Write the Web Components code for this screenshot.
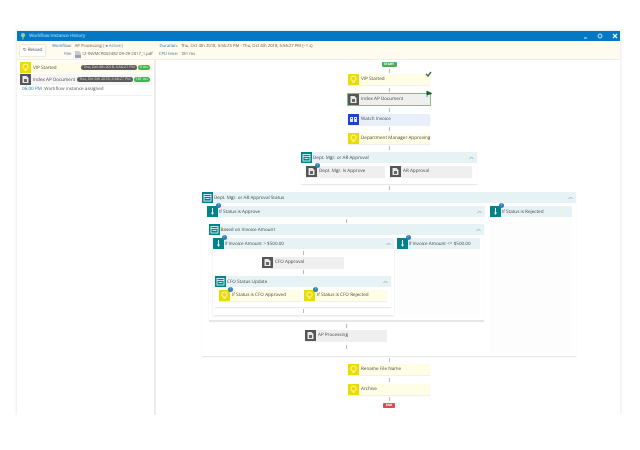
<!DOCTYPE html>
<html>
<head>
<meta charset="utf-8">
<title>Workflow Instance History</title>
<style>
    html, body { margin: 0; background: #fff; }
    body { font-family: "Open Sans", "Liberation Sans", sans-serif; color: #333; text-rendering: geometricPrecision; }
</style>
</head>
<body>
<wf-window>
    <wf-history slot="side"></wf-history>
    <wf-start kind="start">START</wf-start>
    <wf-link h="7"></wf-link>
    <wf-node kind="yellow" state="done">VIP Started</wf-node>
    <wf-link h="9"></wf-link>
    <wf-node kind="grey" state="active">Index AP Document</wf-node>
    <wf-link h="9"></wf-link>
    <wf-node kind="blue">Watch Invoice</wf-node>
    <wf-link h="8"></wf-link>
    <wf-node kind="yellow">Department Manager Approving</wf-node>
    <wf-link h="8"></wf-link>
    <wf-group label="Dept. Mgr. or AR Approval" w="176">
        <wf-split gap="5" pad="3px 5px 7px">
            <wf-node kind="grey" badge w="79">Dept. Mgr. Is Approve</wf-node>
            <wf-node kind="grey" w="82">AR Approval</wf-node>
        </wf-split>
    </wf-group>
    <wf-link h="8"></wf-link>
    <wf-group label="Dept. Mgr. or AR Approval Status" w="374">
        <wf-split gap="5" pad="3px 4px 4px 5px">
            <wf-branch label="If Status is Approve" w="278">
                <wf-link h="7"></wf-link>
                <wf-group label="Based on Invoice Amount" w="275" line>
                    <wf-split gap="3" pad="3px 4px 5px">
                        <wf-branch label="If Invoice Amount > $500.00" w="181" boxed>
                            <wf-link h="8"></wf-link>
                            <wf-node kind="grey">CFO Approval</wf-node>
                            <wf-link h="8"></wf-link>
                            <wf-group label="CFO Status Update" w="176">
                                <wf-split gap="2" pad="3px 4px 6px">
                                    <wf-node kind="yellow" badge w="83">If Status is CFO Approved</wf-node>
                                    <wf-node kind="yellow" badge w="83">If Status is CFO Rejected</wf-node>
                                </wf-split>
                            </wf-group>
                            <wf-link h="8"></wf-link>
                        </wf-branch>
                        <wf-branch label="If Invoice Amount <= $500.00" w="83"></wf-branch>
                    </wf-split>
                </wf-group>
                <wf-link h="9"></wf-link>
                <wf-node kind="grey">AP Processing</wf-node>
                <wf-link h="11"></wf-link>
            </wf-branch>
            <wf-branch label="If Status is Rejected" w="82"></wf-branch>
        </wf-split>
    </wf-group>
    <wf-link h="8"></wf-link>
    <wf-node kind="yellow">Rename File Name</wf-node>
    <wf-link h="9"></wf-link>
    <wf-node kind="yellow">Archive</wf-node>
    <wf-link h="8"></wf-link>
    <wf-start kind="end">END</wf-start>
</wf-window>

<script>
const ICONS = {
    yellow: `<circle cx="5.5" cy="4.6" r="2.6" fill="none" stroke="#fffbb0" stroke-width="1"/><path d="M4.4 7.4h2.2v1.4H4.4z" fill="#fffbb0"/>`,
    grey: `<path d="M2.5 2h4l2 2v5h-6z" fill="#e8e8e8"/><path d="M4 5h3v3H4z" fill="#666"/>`,
    blue: `<path d="M2 3h3v5H2zM6 3h3v5H6z" fill="#dfe7fa"/><path d="M3 4.5h1M7 4.5h1" stroke="#1a45c8"/>`,
    teal: `<rect x="2" y="2.5" width="7" height="6.5" fill="none" stroke="#d8f0f0" stroke-width=".9"/><path d="M2 4.5h7M3.5 6.5h4" stroke="#d8f0f0" stroke-width=".9"/>`,
    branch: `<path d="M5.5 2v5" stroke="#fff" stroke-width="1"/><path d="M4 6.5h3L5.5 9z" fill="#fff"/>`
};

function iconSvg(kind) {
    return `<svg width="11" height="11" viewBox="0 0 11 11">${ICONS[kind]}</svg>`;
}

class WfWindow extends HTMLElement {
    constructor() {
        super();
        this.attachShadow({mode: 'open'});
        this.shadowRoot.innerHTML = `
            <style>
                :host {
                    display: block;
                    box-sizing: border-box;
                    width: 603px;
                    height: 384px;
                    margin: 31px 0 0 17px;
                    background: #fff;
                    box-shadow: 0 0 4px rgba(0,0,0,.13);
                    font-size: 4.6px;
                    filter: blur(.3px);
                }
                .title {
                    display: flex;
                    align-items: center;
                    height: 10px;
                    padding: 0 2px 0 3px;
                    background: #0478c4;
                    color: #d9ecf8;
                }
                .title span { flex: 1; margin-left: 3px; }
                .title .ctl { margin-left: 9px; }
                .top {
                    display: flex;
                    align-items: center;
                    box-sizing: border-box;
                    height: 19px;
                    padding: 1px 2px 0;
                    background: #fffbee;
                    border-bottom: 1px solid #eeeeea;
                    line-height: 8px;
                    font-size: 4.2px;
                }
                .reload {
                    box-sizing: border-box;
                    width: 27px;
                    height: 13px;
                    margin-right: 6px;
                    border: 1px solid #ece9df;
                    border-radius: 1px;
                    background: #fff;
                    text-align: center;
                    line-height: 11px;
                    font-size: 4.6px;
                    color: #444;
                }
                .info { display: grid; grid-template-columns: auto auto; column-gap: 3px; margin-right: 6px; }
                .info b { font-weight: 400; color: #1d6fa5; text-align: right; }
                .info i { font-style: normal; color: #555; white-space: nowrap; display: flex; align-items: center; gap: 1px; }
                .active { color: #1f7fc0; }
                .body { display: flex; height: 355px; }
                .side {
                    width: 137px;
                    flex: none;
                    border-right: 2px solid #ececec;
                }
                .canvas {
                    flex: 1;
                    display: flex;
                    flex-direction: column;
                    align-items: center;
                    padding: 2px 0 0 2px;
                }
            </style>
            <div class="title">
                <svg width="6" height="8" viewBox="0 0 7 8"><circle cx="3.5" cy="3" r="2.4" fill="#8fd0a0"/><path d="M3 5h1v3H3z" fill="#e8dc60"/></svg>
                <span>Workflow Instance History</span>
                <svg width="5" height="5" viewBox="0 0 5 5"><path d="M1 4h3" stroke="#cfe6f5"/></svg>
                <svg class="ctl" width="6" height="6" viewBox="0 0 6 6"><circle cx="3" cy="3" r="2" fill="none" stroke="#cfe6f5"/></svg>
                <svg class="ctl" width="6" height="6" viewBox="0 0 6 6"><path d="M1 1l4 4M5 1L1 5" stroke="#eef6fb" stroke-width="1.2"/></svg>
            </div>
            <div class="top">
                <div class="reload">&#8635; Reload</div>
                <div class="info">
                    <b>Workflow:</b><i>AP Processing ( <span class="active">&#9679; Active</span> )</i>
                    <b>File:</b><i><svg width="6" height="7" viewBox="0 0 6 7"><path d="M0 0h4l2 2v5H0z" fill="#c9ccd2"/><path d="M0 4h6v3H0z" fill="#8fa3b8"/></svg>12-INVMCR002482 09-29-2017_1.pdf</i>
                </div>
                <div class="info">
                    <b>Duration:</b><i>Thu, Oct 4th 2018, 5:56:25 PM - Thu, Oct 4th 2018, 5:56:27 PM (~1 s)</i>
                    <b>CPU time:</b><i>181 ms</i>
                </div>
            </div>
            <div class="body">
                <div class="side"><slot name="side"></slot></div>
                <div class="canvas"><slot></slot></div>
            </div>
        `;
    }
}

class WfHistory extends HTMLElement {
    constructor() {
        super();
        this.attachShadow({mode: 'open'});
        this.shadowRoot.innerHTML = `
            <style>
                :host { display: block; padding-top: 2px; }
                .row { display: flex; align-items: center; height: 11px; margin: 0 2px 1px 3px; gap: 1px; color: #444; white-space: nowrap; }
                .row.y { background: #fffde8; }
                .row.g { background: #f6f6f6; }
                .ic { width: 11px; height: 11px; flex: none; margin-right: 1px; }
                .ic.y { background: #e8dc00; }
                .ic.g { background: #555; }
                .ic svg { display: block; }
                .name { flex: 1; }
                .pill {
                    height: 5px;
                    line-height: 5px;
                    padding: 0 2px;
                    border-radius: 3px;
                    background: #5c5c5c;
                    color: #ddd;
                    font-size: 3.7px;
                }
                .pill.ok { background: #45b254; color: #e8ffe8; margin-right: 2px; }
                .log { margin: 0 2px 0 5px; padding: 0 0 3px; line-height: 6px; color: #555; border-bottom: 1px solid #f2f2f2; }
                .log b { font-weight: 400; color: #1d6fa5; }
            </style>
            <div class="row y"><span class="ic y">${iconSvg('yellow')}</span><span class="name">VIP Started</span><span class="pill">Thu, Oct 4th 2018, 5:56:27 PM</span><span class="pill ok">0 ms</span></div>
            <div class="row g"><span class="ic g">${iconSvg('grey')}</span><span class="name">Index AP Document</span><span class="pill">Thu, Oct 4th 2018, 5:56:27 PM</span><span class="pill ok">181 ms</span></div>
            <div class="log"><b>06:00 PM</b>&nbsp; Workflow instance assigned</div>
        `;
    }
}

class WfLink extends HTMLElement {
    constructor() {
        super();
        this.attachShadow({mode: 'open'});
    }

    connectedCallback() {
        const h = this.getAttribute('h') ?? 8;
        this.shadowRoot.innerHTML = `
            <style>
                :host {
                    display: flex;
                    justify-content: center;
                    align-items: center;
                    align-self: center;
                    flex: none;
                    height: ${h}px;
                }
                div { width: 1px; height: 4px; background: #b9b9b9; }
            </style>
            <div></div>
        `;
    }
}

class WfStart extends HTMLElement {
    constructor() {
        super();
        this.attachShadow({mode: 'open'});
    }

    connectedCallback() {
        const end = this.getAttribute('kind') === 'end';
        this.shadowRoot.innerHTML = `
            <style>
                :host {
                    display: block;
                    flex: none;
                    width: ${end ? 12 : 15}px;
                    height: 5px;
                    border-radius: 1px;
                    background: ${end ? '#dd4a4f' : '#45b254'};
                    color: #fff;
                    font-size: 3.2px;
                    line-height: 5px;
                    text-align: center;
                    font-weight: 700;
                }
            </style>
            <slot></slot>
        `;
    }
}

class WfNode extends HTMLElement {
    constructor() {
        super();
        this.attachShadow({mode: 'open'});
    }

    connectedCallback() {
        const kind = this.getAttribute('kind');
        const state = this.getAttribute('state');
        const w = this.getAttribute('w') ?? 82;
        const theme = {
            yellow: ['#e8dc00', '#fffde6'],
            grey: ['#555', '#efefef'],
            blue: ['#1a45c8', '#e8effa']
        }[kind];
        let mark = '';
        if (state === 'done')
            mark = `<svg class="mark" width="7" height="6" viewBox="0 0 7 6"><path d="M1 3l2 2 3-4" fill="none" stroke="#2f6f3a" stroke-width="1.3"/></svg>`;
        if (state === 'active')
            mark = `<svg class="mark" width="6" height="6" viewBox="0 0 6 6"><path d="M1 0v6M1 0l5 2.5L1 4z" fill="#1d5f33" stroke="#1d5f33" stroke-width=".6"/></svg>`;
        const badge = this.hasAttribute('badge') ? '<span class="badge">?</span>' : '';
        this.shadowRoot.innerHTML = `
            <style>
                :host {
                    display: flex;
                    position: relative;
                    box-sizing: border-box;
                    flex: none;
                    width: ${w}px;
                    height: 11px;
                    background: ${theme[1]};
                    box-shadow: 0 1px 1px rgba(0,0,0,.06);
                    color: #444;
                    ${state === 'active' ? 'outline: 1px solid #84bd8b;' : ''}
                }
                .ic { width: 11px; height: 11px; flex: none; background: ${theme[0]}; }
                .ic svg { display: block; }
                .text { padding-left: 2px; line-height: 11px; white-space: nowrap; overflow: hidden; }
                .mark { position: absolute; right: -2px; top: -3px; }
                .badge {
                    position: absolute;
                    left: 9px;
                    top: -3px;
                    width: 5px;
                    height: 5px;
                    border-radius: 50%;
                    background: #2f7fb5;
                    color: #fff;
                    font-size: 3.5px;
                    line-height: 5px;
                    text-align: center;
                }
            </style>
            <span class="ic">${iconSvg(kind)}</span>
            <span class="text"><slot></slot></span>
            ${mark}${badge}
        `;
    }
}

class WfGroup extends HTMLElement {
    constructor() {
        super();
        this.attachShadow({mode: 'open'});
    }

    connectedCallback() {
        const w = this.getAttribute('w');
        const line = this.hasAttribute('line');
        this.shadowRoot.innerHTML = `
            <style>
                :host {
                    display: block;
                    flex: none;
                    box-sizing: border-box;
                    width: ${w}px;
                    background: #fff;
                    box-shadow: 0 1px 1px rgba(0,0,0,.09);
                    ${line ? 'border-bottom: 1px solid #e6e6e6;' : ''}
                }
                .head {
                    display: flex;
                    align-items: center;
                    height: 11px;
                    background: #e6f2f3;
                    color: #444;
                }
                .ic { width: 11px; height: 11px; flex: none; background: #00838a; margin-right: 1px; }
                .ic svg { display: block; }
                .name { flex: 1; }
                .arrow { margin-right: 3px; }
            </style>
            <div class="head">
                <span class="ic">${iconSvg('teal')}</span>
                <span class="name">${this.getAttribute('label')}</span>
                <svg class="arrow" width="5" height="4" viewBox="0 0 5 4"><path d="M.5 3L2.5 1l2 2" fill="none" stroke="#8aa" stroke-width=".8"/></svg>
            </div>
            <slot></slot>
        `;
    }
}

class WfSplit extends HTMLElement {
    constructor() {
        super();
        this.attachShadow({mode: 'open'});
    }

    connectedCallback() {
        this.shadowRoot.innerHTML = `
            <style>
                :host {
                    display: flex;
                    align-items: stretch;
                    justify-content: space-between;
                    gap: ${this.getAttribute('gap') ?? 4}px;
                    padding: ${this.getAttribute('pad') ?? '3px'};
                }
            </style>
            <slot></slot>
        `;
    }
}

class WfBranch extends HTMLElement {
    constructor() {
        super();
        this.attachShadow({mode: 'open'});
    }

    connectedCallback() {
        const w = this.getAttribute('w');
        const wide = this.children.length > 0;
        this.shadowRoot.innerHTML = `
            <style>
                :host {
                    display: flex;
                    flex-direction: column;
                    align-items: center;
                    flex: none;
                    width: ${w}px;
                    background: ${wide ? '#fff' : '#fdfdfd'};
                    ${this.hasAttribute('boxed') ? 'box-shadow: 0 1px 2px rgba(0,0,0,.12);' : ''}
                }
                .head {
                    display: flex;
                    align-items: center;
                    position: relative;
                    align-self: stretch;
                    height: 11px;
                    background: #e6f2f3;
                    color: #444;
                    white-space: nowrap;
                }
                .ic { width: 11px; height: 11px; flex: none; background: #00838a; margin-right: 1px; }
                .ic svg { display: block; }
                .name { flex: 1; overflow: hidden; }
                .arrow { margin-right: 3px; }
                .badge {
                    position: absolute;
                    left: 9px;
                    top: -3px;
                    width: 5px;
                    height: 5px;
                    border-radius: 50%;
                    background: #2f7fb5;
                    color: #fff;
                    font-size: 3.5px;
                    line-height: 5px;
                    text-align: center;
                }
            </style>
            <div class="head">
                <span class="ic">${iconSvg('branch')}</span>
                <span class="name">${this.getAttribute('label').replace(/</g, '&lt;')}</span>
                ${wide ? '<svg class="arrow" width="5" height="4" viewBox="0 0 5 4"><path d="M.5 3L2.5 1l2 2" fill="none" stroke="#8aa" stroke-width=".8"/></svg>' : ''}
                <span class="badge">?</span>
            </div>
            <slot></slot>
        `;
    }
}

customElements.define('wf-window', WfWindow);
customElements.define('wf-history', WfHistory);
customElements.define('wf-link', WfLink);
customElements.define('wf-start', WfStart);
customElements.define('wf-node', WfNode);
customElements.define('wf-group', WfGroup);
customElements.define('wf-split', WfSplit);
customElements.define('wf-branch', WfBranch);
</script>
</body>
</html>
